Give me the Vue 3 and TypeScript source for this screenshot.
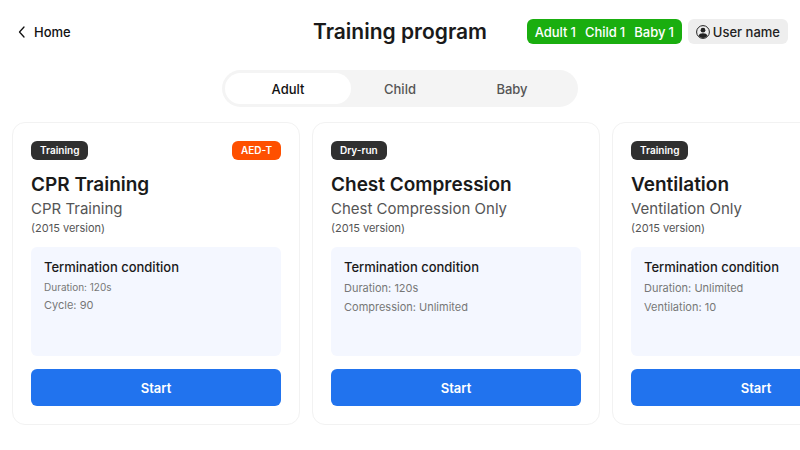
<script setup lang="ts">
import { ref } from 'vue'

interface Program {
  mode: string
  device?: string
  title: string
  subtitle: string
  version: string
  conditions: string[]
  compact?: boolean
}

const groups = ['Adult', 'Child', 'Baby']
const activeGroup = ref('Adult')

const connected = [
  { label: 'Adult', count: 1 },
  { label: 'Child', count: 1 },
  { label: 'Baby', count: 1 },
]

const programs: Program[] = [
  {
    mode: 'Training',
    device: 'AED-T',
    title: 'CPR Training',
    subtitle: 'CPR Training',
    version: '(2015 version)',
    conditions: ['Duration: 120s', 'Cycle: 90'],
    compact: true,
  },
  {
    mode: 'Dry-run',
    title: 'Chest Compression',
    subtitle: 'Chest Compression Only',
    version: '(2015 version)',
    conditions: ['Duration: 120s', 'Compression: Unlimited'],
  },
  {
    mode: 'Training',
    title: 'Ventilation',
    subtitle: 'Ventilation Only',
    version: '(2015 version)',
    conditions: ['Duration: Unlimited', 'Ventilation: 10'],
  },
]
</script>

<template>
  <div class="page">
    <header class="header">
      <a class="back" href="#">
        <svg class="chevron" viewBox="0 0 8 12" fill="none" aria-hidden="true">
          <path d="M6 1 1.5 6 6 11" stroke="#111" stroke-width="1.3" stroke-linecap="round" stroke-linejoin="round" />
        </svg>
        Home
      </a>
      <h1 class="heading">Training program</h1>
      <div class="status">
        <div class="connected">
          <span v-for="item in connected" :key="item.label" class="count">
            <span>{{ item.label }}</span>
            <span>{{ item.count }}</span>
          </span>
        </div>
        <button class="user" type="button">
          <svg class="avatar" viewBox="0 0 14 14" aria-hidden="true">
            <circle cx="7" cy="7" r="6.4" fill="none" stroke="#222" stroke-width="1" />
            <circle cx="7" cy="5.2" r="2.4" fill="#222" />
            <path d="M2.6 11C3 9 4.7 8.3 7 8.3s4 .7 4.4 2.7A5.9 5.9 0 0 1 7 13 5.9 5.9 0 0 1 2.6 11Z" fill="#222" />
          </svg>
          User name
        </button>
      </div>
    </header>

    <nav class="tabs">
      <button
        v-for="group in groups"
        :key="group"
        type="button"
        class="tab"
        :class="{ active: group === activeGroup }"
        @click="activeGroup = group"
      >
        {{ group }}
      </button>
    </nav>

    <main class="cards">
      <article v-for="program in programs" :key="program.title" class="card">
        <div class="badges">
          <span class="badge">{{ program.mode }}</span>
          <span v-if="program.device" class="badge device">{{ program.device }}</span>
        </div>
        <h2 class="title">{{ program.title }}</h2>
        <p class="subtitle">{{ program.subtitle }}</p>
        <p class="version">{{ program.version }}</p>
        <section class="termination" :class="{ compact: program.compact }">
          <h3 class="termination-title">Termination condition</h3>
          <p v-for="condition in program.conditions" :key="condition" class="condition">{{ condition }}</p>
        </section>
        <button class="start" type="button">Start</button>
      </article>
    </main>
  </div>
</template>

<style>
body {
  background: #fff;
}
</style>

<style scoped>
.page {
  padding: 19px 0 25px;
  font-family: Inter, "Liberation Sans", sans-serif;
  color: #1a1a1a;
}

h1,
h2,
h3,
p {
  margin: 0;
}

button {
  border: 0;
  padding: 0;
  font-family: inherit;
  cursor: pointer;
}

.header {
  display: grid;
  grid-template-columns: 1fr auto 1fr;
  align-items: center;
  height: 25px;
  padding: 0 12px;
}

.back {
  display: flex;
  align-items: center;
  gap: 8px;
  padding-left: 6px;
  font-size: 13px;
  line-height: 16px;
  font-weight: 500;
  color: #111;
  text-decoration: none;
}

.chevron {
  width: 8px;
  height: 12px;
}

.heading {
  font-size: 21px;
  line-height: 25px;
  font-weight: 600;
}

.status {
  display: flex;
  justify-content: flex-end;
  gap: 6px;
  white-space: nowrap;
}

.connected,
.user {
  display: flex;
  align-items: center;
  height: 25px;
  border-radius: 6px;
  font-size: 13px;
  font-weight: 500;
}

.connected {
  gap: 9px;
  padding: 0 8px;
  background: #1aae0f;
  color: #fff;
}

.count {
  display: flex;
  gap: 3px;
}

.user {
  gap: 3px;
  padding: 0 8px;
  background: #eee;
  color: #222;
}

.avatar {
  width: 14px;
  height: 14px;
}

.tabs {
  display: flex;
  width: fit-content;
  margin: 26px auto 0;
  padding: 3px;
  border-radius: 19px;
  background: #f4f4f4;
}

.tab {
  width: 126px;
  height: 31px;
  border-radius: 16px;
  background: transparent;
  font-size: 13px;
  font-weight: 500;
  color: #555;
}

.tab + .tab {
  margin-left: -14px;
}

.tab.active {
  background: #fff;
  color: #111;
}

.cards {
  display: flex;
  gap: 12px;
  margin-top: 15px;
  padding: 0 12px;
  overflow-x: auto;
  scrollbar-width: none;
}

.card {
  display: flex;
  flex: 0 0 288px;
  flex-direction: column;
  box-sizing: border-box;
  padding: 18px;
  border: 1px solid #f2f2f2;
  border-radius: 13px;
}

.badges {
  display: flex;
  justify-content: space-between;
}

.badge {
  padding: 0 9px;
  border-radius: 6px;
  background: #303030;
  font-size: 10px;
  line-height: 19px;
  font-weight: 600;
  color: #fff;
}

.badge.device {
  background: #fe5000;
}

.title {
  margin-top: 13px;
  font-size: 19px;
  line-height: 24px;
  font-weight: 600;
}

.subtitle {
  margin-top: 2px;
  font-size: 15px;
  line-height: 20px;
  color: #555;
}

.version {
  margin-top: 2px;
  font-size: 11px;
  line-height: 14px;
  color: #555;
}

.termination {
  box-sizing: border-box;
  min-height: 109px;
  margin-top: 12px;
  padding: 12px 13px;
  border-radius: 6px;
  background: #f4f7ff;
}

.termination-title {
  margin-bottom: 4px;
  font-size: 13px;
  line-height: 16px;
  font-weight: 500;
}

.condition {
  font-size: 11px;
  line-height: 19px;
  color: #777;
}

.compact .condition:first-of-type {
  font-size: 10px;
  line-height: 17px;
}

.start {
  height: 37px;
  margin-top: 13px;
  border-radius: 6px;
  background: #2173ee;
  font-size: 13px;
  font-weight: 600;
  color: #fff;
}
</style>
